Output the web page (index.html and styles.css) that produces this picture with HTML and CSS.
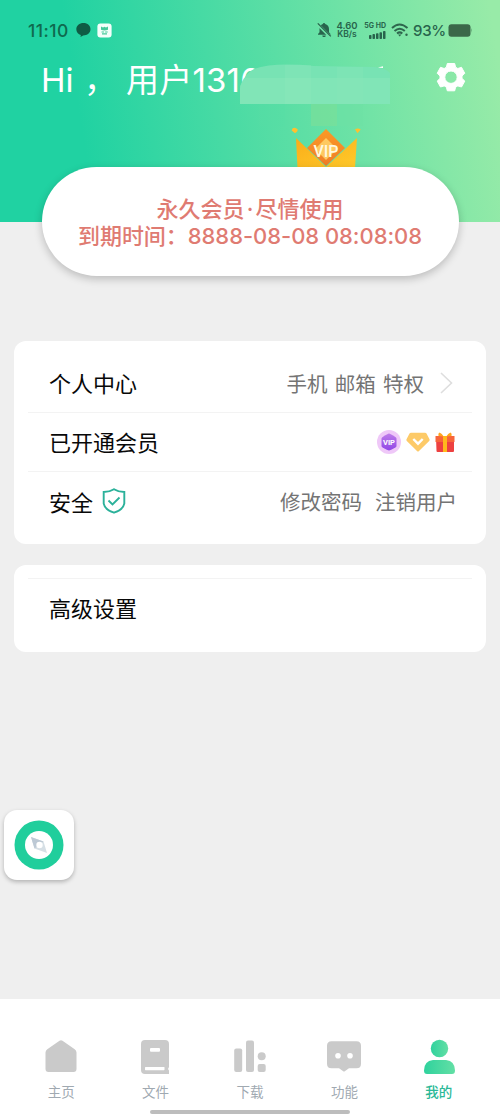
FILE: index.html
```html
<!DOCTYPE html>
<html lang="zh-CN">
<head>
<meta charset="utf-8">
<title>我的</title>
<link rel="stylesheet" href="styles.css">
</head>
<body>
<div class="app">
  <header class="hero">
    <div class="status">
      <span class="clock">11:10</span>
      <svg class="chat" width="15" height="14" viewBox="0 0 15 14"><path d="M7.500 0C3.400 0 .3 2.700.3 6.200c0 3 2 5 4.500 5.800L4.500 14l2.600-1.600c4.300 0 7.400-2.700 7.400-6.200S11.600 0 7.500 0z" fill="#0f5c45"/></svg>
      <svg class="appmark" width="15" height="15" viewBox="0 0 15 15"><rect x=".4" y=".4" width="14.200" height="14.200" rx="3" fill="#f4fffb"/><path d="M4 3.500l2 1 1.500-.8 1.500.8 2-1v3.200q-3.500 1.600-7 0zM4.500 8.600h2.600v1H4.500zm3.600 0h2.600v1H8.100zM5 10.300h5v1.300H5z" fill="#45c99b"/></svg>
      <div class="status-right">
        <svg class="mute" width="15" height="16" viewBox="0 0 15 16"><path d="M7 1c.7 0 1.100.4 1.200 1.100C10.500 2.700 12 4.500 12 7v3.200l1.500 1.900v.6H1v-.6l1.500-1.900V7C2.500 4.500 3.700 2.700 5.800 2.100 5.900 1.400 6.300 1 7 1zM5.300 13.400h3.500c0 1-.8 1.700-1.800 1.700s-1.700-.7-1.700-1.700z" fill="#28644c"/><path d="M.2 1.800l13 13" stroke="#6fe2a8" stroke-width="3"/><path d="M.8 1.400l13 13" stroke="#28644c" stroke-width="1.300"/></svg>
        <span class="speed"><span>4.60</span><span>KB/s</span></span>
        <span class="net"><span>5G HD</span>
          <svg width="17" height="8" viewBox="0 0 17 8" fill="#28644c"><rect x="0" y="4" width="2.500" height="4" rx=".8"/><rect x="3.500" y="3" width="2.500" height="5" rx=".8"/><rect x="7" y="2.200" width="2.500" height="5.800" rx=".8"/><rect x="10.500" y="1.200" width="2.500" height="6.800" rx=".8"/><rect x="14" y="0" width="2.500" height="8" rx=".8"/></svg>
        </span>
        <svg class="wifi" width="18" height="14" viewBox="0 0 18 14" fill="none" stroke="#2e664d" stroke-width="2"><path d="M1 5q7.500-7 15.500 0M3.500 8q5.200-4.600 10.300 0M6 10.500q2.700-2.200 5.300 0"/><path d="M7 11.500h3.400L8.700 13.500z" fill="#2e664d" stroke="none"/><circle cx="15.500" cy="11.800" r="1.200" fill="#2e664d" stroke="none"/></svg>
        <span class="percent">93%</span>
        <svg class="battery" width="25" height="13" viewBox="0 0 25 13"><rect x=".5" y=".3" width="22" height="12.400" rx="3" fill="#3b6849"/><path d="M23 4q1.600 2.400 0 5z" fill="#3b6849" opacity=".7"/></svg>
      </div>
    </div>
    <div class="greeting">
      <h1 class="hello"><span class="hi">Hi</span><span class="comma">，</span><span class="user">用户1316</span></h1>
      <svg class="gear" width="30" height="30" viewBox="0 0 30 30"><path fill="#fff" fill-rule="evenodd" stroke="#fff" stroke-linejoin="round" d="M11.300 1.500h7.400l.9 3.700 2.200 1.300 3.700-1.200 3.300 6-2.800 2.700v2.400l2.800 2.700-3.300 5.900-3.700-1.100-2.200 1.300-.9 3.600h-7.400l-.9-3.600-2.200-1.300-3.700 1.100-3.300-5.900 2.800-2.700V14l-2.800-2.700 3.300-6 3.700 1.200 2.200-1.300zM15 9a6.200 6.200 0 1 0 0 12.400A6.200 6.200 0 0 0 15 9z"/></svg>
      <svg class="mask" width="152" height="62" viewBox="0 0 152 62">
        <path d="M1 40V25C2 18 7 9 15 5Q35-2 75 2l60 1q12 1 16 6v31z" fill="#78e3b4"/>
        <path d="M28 14h123v26H1V22l4-8z" fill="#85e6b9" opacity=".65"/>
        <path d="M46 1h26v39H46z" fill="#8de8bc" opacity=".3"/>
        <path d="M98 3h26v37H98z" fill="#8ce8b8" opacity=".25"/>
        <path d="M20 40h26v22H20z" fill="#55dda5" opacity=".3"/><path d="M72 40h26v22H72z" fill="#7bde98" opacity=".65"/><path d="M98 40h26v22H98z" fill="#6fe1a6" opacity=".4"/>
        <path d="M139 3.500l5-1.200V4z" fill="#fff"/>
      </svg>
    </div>
    <svg class="crown" width="72" height="42" viewBox="0 0 72 42">
      <defs><linearGradient id="gem" x1="0" y1="0" x2="0" y2="1"><stop offset="0" stop-color="#fb9a26"/><stop offset="1" stop-color="#ef7d28"/></linearGradient><linearGradient id="gold" x1="0" y1="0" x2="1" y2="1"><stop offset="0" stop-color="#faad19"/><stop offset="1" stop-color="#ffca2b"/></linearGradient></defs>
      <path d="M6 12l30 29 31-29-2 30H7.500z" fill="url(#gold)"/>
      <path d="M36 3l19 19-19 18-19-18z" fill="url(#gem)"/>
      <path d="M36 12l11 11-11 11-11-11z" fill="#ffd36b" opacity=".85"/>
      <path d="M2.500 2.500Q5 .8 7.800 3.500 8 5.500 5 7.300L1.700 4.500zM65 3.200q3-1.500 5.700.2L67.500 7.300z" fill="#ffc12e"/>
      <text x="36" y="31" text-anchor="middle" class="crown-text">VIP</text>
    </svg>
  </header>
  <section class="member">
    <p>永久会员<span class="dot">·</span>尽情使用</p>
    <p class="expiry">到期时间：<span>8888-08-08 08:08:08</span></p>
  </section>
  <main class="panels">
    <section class="panel">
      <div class="row"><span class="label">个人中心</span>
        <span class="hint contact">手机 邮箱 特权</span>
        <svg class="chevron" width="13" height="22" viewBox="0 0 13 22"><path d="M1 1l10.500 10L1 21" fill="none" stroke="#dedede" stroke-width="1.600"/></svg>
      </div>
      <div class="row"><span class="label">已开通会员</span>
        <span class="badges">
          <svg width="24" height="24" viewBox="0 0 24 24"><defs><linearGradient id="hex" x1="0" y1="0" x2="0" y2="1"><stop offset="0" stop-color="#be7bea"/><stop offset="1" stop-color="#9147e6"/></linearGradient></defs><circle cx="12" cy="12" r="12" fill="#efc8f8"/><path d="M12 3.500q1 0 6.700 3.700.8.600.8 1.500v7q0 1-.8 1.500Q13 20.500 12 20.500t-6.700-3.300q-.8-.5-.8-1.500v-7q0-.9.800-1.500Q11 3.500 12 3.500z" fill="url(#hex)"/><text x="12" y="14.600" text-anchor="middle" class="badge-text">VIP</text></svg>
          <svg width="24" height="20" viewBox="0 0 24 20"><path d="M5 .7h14q1 0 1.500.8l3 5.700q.5.900-.3 1.700L13 19q-1 1-2 0L.8 8.900Q0 8.100.5 7.200l3-5.700Q4 .7 5 .7z" fill="#fdca68"/><path d="M7.300 7l4.700 4.700L16.700 7" fill="none" stroke="#fff" stroke-width="2.400"/></svg>
          <svg width="20" height="20" viewBox="0 0 20 20"><path d="M1 5h18v14q0 1-1 1H2.500q-1 0-1-1z" fill="#ed4141"/><path d="M.5 4h19v6H.5z" fill="#f7653b"/><path d="M8 4h4v16H8z" fill="#ffb91c"/><path d="M8.700 4.500L3.500 4q-.7-3 1-3.500Q7 1.500 8.700 4.500zm2.600 0L16.500 4q.7-3-1-3.500-2.500 1-4.200 4z" fill="#ffa51e"/></svg>
        </span>
      </div>
      <div class="row"><span class="label">安全</span>
        <svg class="shield" width="24" height="26" viewBox="0 0 24 26" fill="none" stroke="#2bb19a" stroke-width="1.900"><path d="M12 1.200Q16.500 4 22.300 4v11.500Q21 22 12 24.700 3 22 1.700 15.500V4Q7.500 4 12 1.200z"/><path d="M6.500 12.500l4 4 7-7"/></svg>
        <span class="hint actions"><span>修改密码</span><span>注销用户</span></span>
      </div>
    </section>
    <section class="panel advanced"><div class="row"><span class="label">高级设置</span></div></section>
    <button class="compass" aria-label="导航"><svg width="50" height="50" viewBox="0 0 50 50"><circle cx="25" cy="25" r="24.500" fill="#20ce9c"/><circle cx="25" cy="25" r="14" fill="#fff"/><path d="M17 17l12.500 4.500L33 33l-12.500-4.500z" fill="#d6dfe5"/><path d="M17 17l12.500 4.500-9 7z" fill="#bdc9d5"/><circle cx="25.500" cy="25" r="3.200" fill="#fff"/></svg></button>
  </main>
  <nav class="tabs">
    <a class="tab"><svg width="36" height="36" viewBox="0 0 36 36" fill="#cacaca"><path d="M16.500 1.800q1.500-1 3 0l12.200 8.400q1.800 1.200 1.800 3.300V30q0 3-3 3h-25q-3 0-3-3V13.500q0-2.100 1.800-3.300z"/></svg><span>主页</span></a>
    <a class="tab"><svg width="36" height="36" viewBox="0 0 36 36"><path d="M7 1h20q4 0 4 4v23l-1 2 1 1.500V35H7q-4 0-4-4V5q0-4 4-4z" fill="#cacaca"/><rect x="12" y="9" width="10" height="3.800" rx="1" fill="#fff"/><rect x="7" y="28" width="19.500" height="3.200" rx=".6" fill="#fff"/></svg><span>文件</span></a>
    <a class="tab"><svg width="36" height="36" viewBox="0 0 36 36" fill="#cacaca"><rect x="2.200" y="9.500" width="8" height="23.500" rx="2"/><rect x="14" y="1.500" width="8" height="31.500" rx="2"/><circle cx="29.700" cy="17.300" r="4"/><rect x="25.700" y="25" width="8" height="8" rx="2"/></svg><span>下载</span></a>
    <a class="tab"><svg width="36" height="36" viewBox="0 0 36 36"><path d="M5.500 2.200h25q4.500 0 4.500 4.500v18q0 4.500-4.500 4.500H23L18 32.800l-5-3.600H5.500Q1 29.200 1 24.700v-18q0-4.500 4.500-4.500z" fill="#cacaca"/><circle cx="12" cy="16.800" r="2.800" fill="#fff"/><circle cx="24" cy="16.800" r="2.800" fill="#fff"/></svg><span>功能</span></a>
    <a class="tab active"><svg width="36" height="36" viewBox="0 0 36 36"><defs><linearGradient id="person"><stop stop-color="#2fd29d"/><stop offset="1" stop-color="#63dfa5"/></linearGradient></defs><circle cx="18.500" cy="9.500" r="8.700" fill="url(#person)"/><path d="M12 21h13q9 1 9 10.500 0 3.500-3 3.500H6q-3 0-3-3.500Q3 22 12 21z" fill="url(#person)"/></svg><span>我的</span></a>
    <i class="homebar"></i>
  </nav>
</div>
</body>
</html>
```
FILE: styles.css
```css
* { box-sizing: border-box; }
body { margin: 0; font-family: Inter, "Noto Sans CJK SC", sans-serif; }
svg { display: block; flex: none; }
p, h1 { margin: 0; }
.app { width: 500px; height: 1115px; display: flex; flex-direction: column; background: #efefef; overflow: hidden; }
.hero { height: 222px; flex: none; display: flex; flex-direction: column; background: linear-gradient(81deg, #20d2a2 18%, #98eba8 98%); }
.status { height: 60px; flex: none; display: flex; align-items: center; padding: 0 27px 0 28px; color: #0f6a4e; }
.clock { width: 48px; font-size: 17.500px; font-weight: 500; letter-spacing: .5px; }
.appmark { margin-left: 6px; }
.status-right { margin-left: auto; display: flex; align-items: center; color: #28644c; }
.speed { width: 24px; margin-left: 3px; display: flex; flex-direction: column; align-items: center; font-size: 8.500px; line-height: 9px; font-weight: 600; }
.speed span { height: 9px; overflow: hidden; }
.speed span:first-child { font-size: 9.500px; }
.net { width: 23px; margin-left: 4px; display: flex; flex-direction: column; align-items: flex-end; gap: 2px; font-size: 7px; line-height: 7px; font-weight: 700; white-space: nowrap; }
.wifi { margin-left: 5px; }
.percent { width: 32px; margin-left: 4px; font-size: 15px; font-weight: 500; letter-spacing: -.3px; }
.battery { margin-left: 3px; }
.greeting { position: relative; height: 42px; flex: none; display: flex; align-items: center; padding: 0 34px 0 41px; }
.hello { width: 350px; display: flex; align-items: center; margin-top: -3px; color: #fff; font-size: 33px; line-height: 40px; font-weight: 400; white-space: nowrap; }
.hi { width: 43px; }
.comma { width: 42px; }
.user { letter-spacing: .2px; }
.gear { margin: -9px 0 0 auto; }
.mask { position: absolute; left: 239px; top: 4px; }
.crown { margin: 24px 0 0 290px; }
.crown-text { font-family: Roboto, sans-serif; font-size: 16px; font-weight: 500; fill: #fff8df; }
.member { position: relative; width: 417px; height: 109px; flex: none; margin: -55px 0 0 41.500px; padding-top: 29px; border-radius: 55px; background: #fff; box-shadow: 0 3px 9px rgba(0,0,0,.22); text-align: center; color: #df7b72; font-size: 22px; line-height: 27px; font-weight: 500; white-space: nowrap; }
.dot { display: inline-block; width: 11px; }
.expiry { letter-spacing: -.05px; }
.panels { flex: 1; padding: 65px 14px 0; }
.panel { height: 203px; padding: 13px 14px; border-radius: 12px; background: #fff; }
.row { height: 59px; display: flex; align-items: center; padding: 0 15px 0 21px; border-bottom: 1.500px solid #f3f3f3; }
.row:last-child { border-bottom: 0; }
.label { margin-top: -2px; font-size: 22px; color: #080808; white-space: nowrap; }
.hint { margin-top: -1px; margin-left: auto; font-size: 20.500px; color: #747474; white-space: nowrap; }
.contact { word-spacing: 1.500px; }
.chevron { margin: 0 4px 0 16px; }
.badges { margin: 0 2px 0 auto; display: flex; align-items: center; gap: 5px; }
.badge-text { font-family: Roboto, sans-serif; font-size: 7.500px; font-weight: 700; fill: #fff; }
.shield { margin: -2px 0 0 9px; }
.actions { display: flex; gap: 13px; }
.advanced { height: 87px; margin-top: 21px; }
.advanced .row { border-top: 1.500px solid #f3f3f3; }
.compass { display: grid; place-items: center; width: 70px; height: 70px; margin: 158px 0 0 -10px; padding: 0; border: 0; border-radius: 13px; background: #fff; box-shadow: 0 2px 4px rgba(0,0,0,.25); }
.tabs { position: relative; height: 116px; flex: none; display: flex; padding: 40px 14px 0; background: #fff; }
.tab { flex: 1; display: flex; flex-direction: column; align-items: center; gap: 7px; color: #a0a9b1; font-size: 13.500px; line-height: 20px; }
.tab.active { color: #2bb997; font-weight: 500; }
.homebar { position: absolute; left: 150px; bottom: 1px; width: 200px; height: 4px; border-radius: 2px; background: #bdbdbd; }
```
